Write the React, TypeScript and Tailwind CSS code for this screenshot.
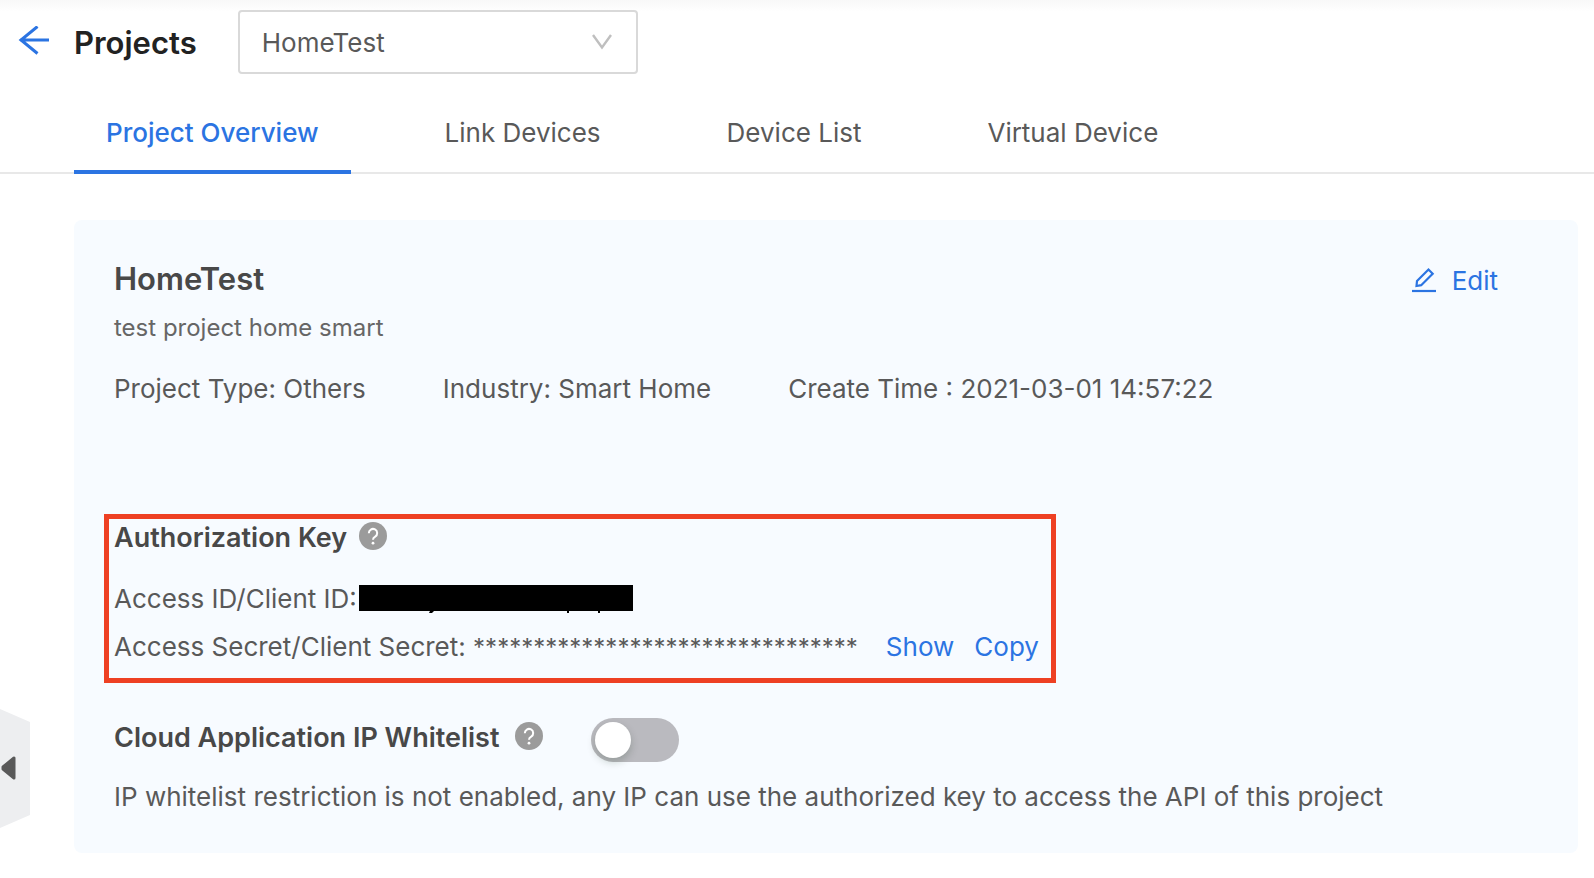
import React, { useState } from 'react';

const tabs = ['Project Overview', 'Link Devices', 'Device List', 'Virtual Device'];

const HelpIcon: React.FC = () => (
  <svg className="w-7 h-7 shrink-0" viewBox="0 0 28 28" fill="none">
    <circle cx="14" cy="14" r="14" fill="#9b9b9b" />
    <path d="M9.8 11.2a4.2 4.2 0 1 1 6.4 3.5c-1.5.9-2.2 1.5-2.2 3.1" stroke="#fff" strokeWidth="2" />
    <circle cx="14" cy="21.2" r="1.4" fill="#fff" />
  </svg>
);

const App: React.FC = () => {
  const [activeTab, setActiveTab] = useState(tabs[0]);
  const [project, setProject] = useState('HomeTest');
  const [whitelist, setWhitelist] = useState(false);
  const [showSecret, setShowSecret] = useState(false);

  return (
    <div className="relative min-h-screen bg-white text-[26px] leading-8 text-[#595959] font-['Inter','Liberation_Sans',sans-serif]">
      <div className="absolute inset-x-0 top-0 h-3 bg-linear-to-b from-[#f8f8f8] to-white" />

      {/* Header */}
      <header className="relative flex items-center pt-[10px] pl-[18px]">
        <button aria-label="Back" className="text-[#2b74e2]">
          <svg className="w-8 h-8" viewBox="0 0 32 32" fill="none" stroke="currentColor" strokeWidth="3">
            <path d="M19.5 0.5L3 14L19.5 27.5M2 14H31" />
          </svg>
        </button>
        <h1 className="ml-6 pt-0.5 text-[31px] leading-10 font-semibold text-[#222]">Projects</h1>
        <div className="relative ml-[41px] w-[400px]">
          <select
            aria-label="Project"
            value={project}
            onChange={(e) => setProject(e.target.value)}
            className="w-full h-16 pt-0.5 pl-[22px] pr-16 appearance-none bg-white border-2 border-[#d9d9d9] rounded"
          >
            <option>HomeTest</option>
          </select>
          <svg
            className="absolute right-[26px] top-6 w-5 h-4 text-[#bfbfbf] pointer-events-none"
            viewBox="0 0 20 16"
            fill="none"
            stroke="currentColor"
            strokeWidth="2.4"
          >
            <path d="M1 1L10 13.5L19 1" />
          </svg>
        </div>
      </header>

      {/* Tabs */}
      <nav className="flex gap-[62px] pl-[74px] border-b-2 border-[#e8e8e8]">
        {tabs.map((tab) => (
          <button
            key={tab}
            onClick={() => setActiveTab(tab)}
            className={`-mb-[2px] px-8 pt-[43px] pb-[21px] border-b-4 whitespace-nowrap ${
              tab === activeTab ? 'border-[#2b74e2] text-[#2b74e2] font-medium' : 'border-transparent'
            }`}
          >
            {tab}
          </button>
        ))}
      </nav>

      {/* Project card */}
      <main className="mt-[46px] ml-[74px] mr-4 px-10 pt-[39px] pb-10 rounded-lg bg-[#f7fbff]">
        <div className="flex items-start justify-between">
          <h2 className="text-[31px] leading-10 font-semibold text-[#484848]">{project}</h2>
          <button className="flex items-center gap-4 mt-1.5 mr-10 text-[#2b74e2]">
            <svg className="w-6 h-7" viewBox="0 0 24 28" fill="none" stroke="currentColor" strokeWidth="2.2">
              <path d="M4.5 19L5 14L16.5 2.5L20.7 6.7L9.2 18.2Z" />
              <path d="M0 24H24" />
            </svg>
            Edit
          </button>
        </div>
        <p className="mt-[13px] text-2xl leading-8 text-[#666]">test project home smart</p>
        <div className="flex gap-[77px] mt-[29px]">
          <span>Project Type: Others</span>
          <span>Industry: Smart Home</span>
          <span>Create Time : 2021-03-01 14:57:22</span>
        </div>

        {/* Authorization key */}
        <section className="w-fit mt-[109px] -ml-[10px] pt-px pb-[15px] pl-[5px] pr-3 border-5 border-[#ee4023]">
          <div className="flex items-start gap-3">
            <h3 className="text-[27px] leading-9 font-semibold text-[#484848]">Authorization Key</h3>
            <div className="mt-0.5">
              <HelpIcon />
            </div>
          </div>
          <div className="flex items-center gap-0.5 mt-[27px]">
            <span>Access ID/Client ID:</span>
            <svg className="w-[274px] h-7" viewBox="0 0 274 28">
              <path d="M0 0H274V26H0ZM71 26H75L73 28H70ZM208 26H210V28H208ZM239 26H241V28H239Z" fill="#000" />
            </svg>
          </div>
          <div className="flex mt-4">
            <span>
              Access Secret/Client Secret: <span className="text-2xl leading-none">{'*'.repeat(32)}</span>
            </span>
            <button onClick={() => setShowSecret(!showSecret)} className="ml-7 text-[#2b74e2]">
              {showSecret ? 'Hide' : 'Show'}
            </button>
            <button className="ml-5 text-[#2b74e2]">Copy</button>
          </div>
        </section>

        {/* IP whitelist */}
        <div className="flex items-start mt-[35px]">
          <h3 className="mt-0.5 mr-4 text-[27px] leading-9 font-semibold text-[#484848]">Cloud Application IP Whitelist</h3>
          <div className="mt-1">
            <HelpIcon />
          </div>
          <button
            role="switch"
            aria-checked={whitelist}
            aria-label="Cloud Application IP Whitelist"
            onClick={() => setWhitelist(!whitelist)}
            className={`flex ml-12 w-[88px] h-11 p-1 rounded-full ${whitelist ? 'justify-end bg-[#2b74e2]' : 'bg-[#bababf]'}`}
          >
            <span className="w-9 h-9 rounded-full bg-white shadow-[0_4px_8px_rgba(0,35,11,0.2)]" />
          </button>
        </div>
        <p className="mt-[19px]">
          IP whitelist restriction is not enabled, any IP can use the authorized key to access the API of this project
        </p>
      </main>

      {/* Sidebar handle */}
      <button aria-label="Collapse sidebar" className="absolute left-0 top-[709px]">
        <svg className="w-[30px] h-[119px]" viewBox="0 0 30 119">
          <path d="M0 0L30 13V106L0 119Z" fill="#edeef0" />
          <path d="M3 58L14 49V69L3 60Z" fill="#595959" stroke="#595959" strokeWidth="3" strokeLinejoin="round" />
        </svg>
      </button>
    </div>
  );
};

export default App;
